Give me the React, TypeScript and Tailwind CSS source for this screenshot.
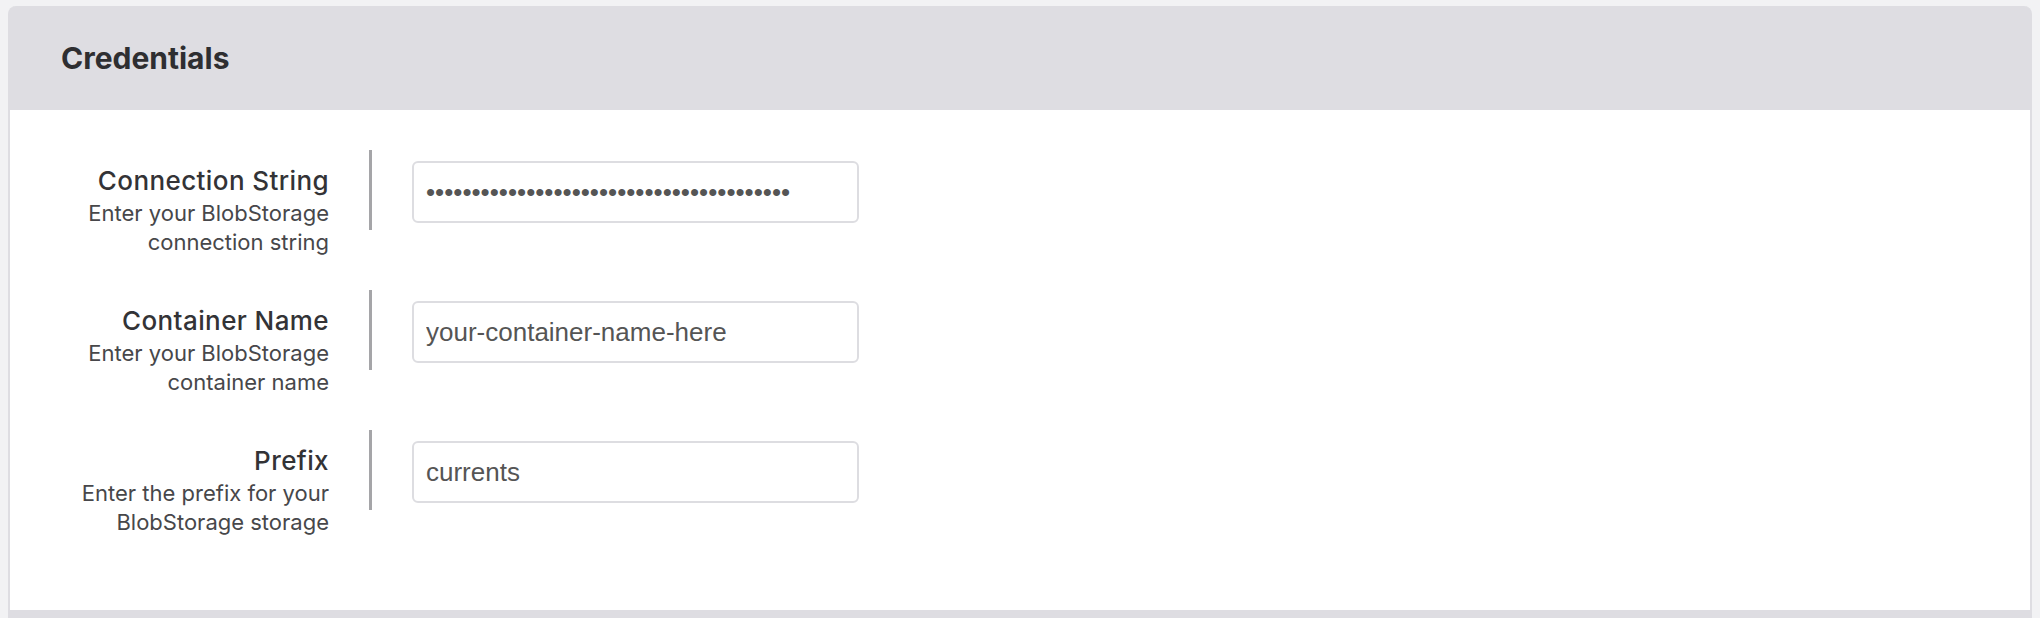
import React from "react";

const fields = [
  {
    label: "Connection String",
    help: ["Enter your BlobStorage", "connection string"],
    type: "password",
    value: "DefaultEndpointsProtocol=https;AccountKe",
  },
  {
    label: "Container Name",
    help: ["Enter your BlobStorage", "container name"],
    type: "text",
    value: "your-container-name-here",
  },
  {
    label: "Prefix",
    help: ["Enter the prefix for your", "BlobStorage storage"],
    type: "text",
    value: "currents",
  },
];

function FieldRow({
  label,
  help,
  type,
  value,
}: {
  label: string;
  help: string[];
  type: string;
  value: string;
}) {
  return (
    <div className="flex items-start">
      <div className="w-[319px] shrink-0 pt-[13px] text-right">
        <div className="text-[26px] leading-[36px] font-medium tracking-[0.4px] text-[#333336]">
          {label}
        </div>
        {help.map((line) => (
          <div key={line} className="text-[22px] leading-[29px] text-[#47474a]">
            {line}
          </div>
        ))}
      </div>
      <div className="ml-[40px] h-[80px] border-l-[3px] border-[#a5a5a8] pl-[40px] pt-[11px]">
        <input
          type={type}
          defaultValue={value}
          readOnly
          className="h-[62px] w-[447px] rounded-[6px] border-2 border-[#dddde1] bg-white px-[12px] text-[26px] text-[#555555] outline-none [font-family:'Liberation_Sans',Arial,sans-serif]"
        />
      </div>
    </div>
  );
}

export default function App() {
  return (
    <div className="min-h-screen bg-[#f2f2f4] px-[8px] pt-[6px] font-['Inter',sans-serif]">
      <div className="overflow-hidden rounded-t-[8px] border-x-2 border-[#dedde2] bg-[#dedde2]">
        <div className="flex h-[104px] items-center px-[51px]">
          <h2 className="text-[30px] font-bold text-[#2e2e31]">Credentials</h2>
        </div>
        <div className="flex flex-col gap-[33px] bg-white pt-[40px] pb-[73px]">
          {fields.map((f) => (
            <FieldRow key={f.label} {...f} />
          ))}
        </div>
        <div className="h-[40px]" />
      </div>
    </div>
  );
}
